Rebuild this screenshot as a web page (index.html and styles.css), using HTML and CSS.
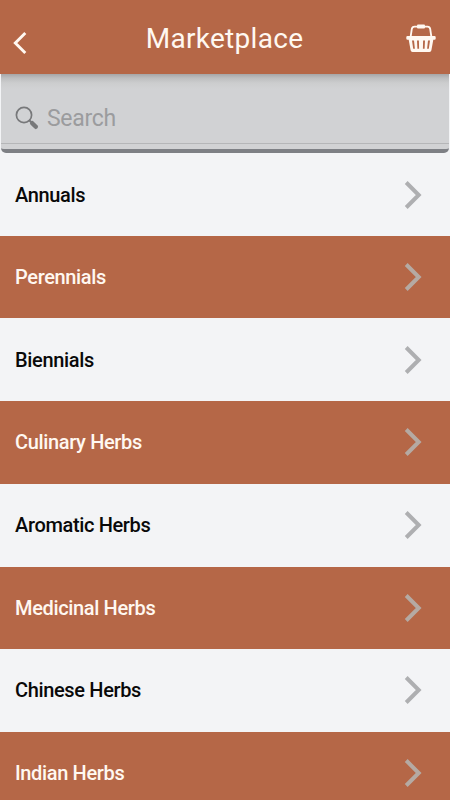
FILE: index.html
```html
<!DOCTYPE html>
<html lang="en">
<head>
    <meta charset="UTF-8">
    <meta name="viewport" content="width=device-width, initial-scale=1.0">
    <title>Marketplace</title>
    <link rel="stylesheet" href="styles.css">
</head>
<body>
    <svg class="symbols">
        <symbol id="chevron" viewBox="0 0 18 30">
            <path d="M2.2 2.5 L14.7 15 L2.2 27.5" fill="none" stroke="currentColor" stroke-width="4"/>
        </symbol>
    </svg>

    <header class="header">
        <a class="back" href="#" aria-label="Back">
            <svg width="16" height="24" viewBox="0 0 16 24">
                <path d="M12.3 2 L2.3 12 L12.3 22" fill="none" stroke="currentColor" stroke-width="2.9"/>
            </svg>
        </a>
        <h1>Marketplace</h1>
        <a class="basket" href="#" aria-label="Basket">
            <svg width="30" height="28" viewBox="0 0 30 28">
                <path d="M4.6 13 L5.8 5 Q6.2 2.6 8.5 2.6 H21.5 Q23.8 2.6 24.2 5 L25.4 13" fill="none" stroke="currentColor" stroke-width="1.8"/>
                <rect x="11" y="0.6" width="8" height="3.8" rx="1" fill="currentColor"/>
                <path fill="currentColor" fill-rule="evenodd" d="M1.5 12 H28.5 Q29.7 12 29.7 13.2 V14.5 Q29.7 15.7 28.5 15.7 H27.3 L25.4 26.3 Q25.1 28 23.5 28 H6.5 Q4.9 28 4.6 26.3 L2.7 15.7 H1.5 Q0.3 15.7 0.3 14.5 V13.2 Q0.3 12 1.5 12 Z M6 16.5 L7.2 24.8 H8.9 L8 16.5 Z M11 16.5 L11.4 24.8 H13.1 L12.9 16.5 Z M17.1 16.5 L16.9 24.8 H18.6 L19 16.5 Z M22 16.5 L21.1 24.8 H22.8 L24 16.5 Z"/>
            </svg>
        </a>
    </header>

    <div class="search">
        <svg width="24" height="24" viewBox="0 0 24 24">
            <circle cx="9" cy="9" r="7.6" fill="none" stroke="currentColor" stroke-width="1.7"/>
            <path d="M14 14 L17 17" stroke="currentColor" stroke-width="2"/>
            <path d="M17.2 17.2 L20.8 20.8" stroke="currentColor" stroke-width="4.4" stroke-linecap="round"/>
        </svg>
        <input type="text" placeholder="Search">
    </div>

    <ul class="list">
        <li><span>Annuals</span><svg><use href="#chevron"/></svg></li>
        <li><span>Perennials</span><svg><use href="#chevron"/></svg></li>
        <li><span>Biennials</span><svg><use href="#chevron"/></svg></li>
        <li><span>Culinary Herbs</span><svg><use href="#chevron"/></svg></li>
        <li><span>Aromatic Herbs</span><svg><use href="#chevron"/></svg></li>
        <li><span>Medicinal Herbs</span><svg><use href="#chevron"/></svg></li>
        <li><span>Chinese Herbs</span><svg><use href="#chevron"/></svg></li>
        <li><span>Indian Herbs</span><svg><use href="#chevron"/></svg></li>
    </ul>
</body>
</html>
```

FILE: styles.css
```css
* {
    box-sizing: border-box;
}
body {
    margin: 0;
    height: 100vh;
    overflow: hidden;
    background-color: #f3f4f6;
    font-family: Roboto, sans-serif;
}
.symbols {
    display: none;
}
.header {
    display: grid;
    grid-template-columns: 60px 1fr 60px;
    height: 74px;
    padding: 2px 14px 0 13px;
    align-items: center;
    background-color: #b56747;
    color: #fff8f1;
}
.header h1 {
    margin: 0;
    font-size: 28px;
    font-weight: 400;
    letter-spacing: 0.3px;
    text-align: center;
}
.header a {
    display: flex;
    color: inherit;
}
.back {
    padding-top: 9px;
}
.basket {
    justify-content: flex-end;
}
.search {
    display: flex;
    align-items: center;
    gap: 8px;
    height: 79px;
    margin: 0 1px;
    padding: 13px 14px 0;
    border-bottom: 4px solid #7e8085;
    border-radius: 0 0 5px 5px;
    background: linear-gradient(#a6a6a7, #bdbebf 4px, #cccdce 9px, #d1d2d4 15px, #d1d2d4 69px, #b5b6b8 69px, #b5b6b8 70px, #d1d2d4 70px);
    color: #77787a;
}
.search input {
    width: 300px;
    padding: 0;
    border: none;
    outline: none;
    background: none;
    font-family: inherit;
    font-size: 23px;
    letter-spacing: -0.3px;
}
.search input::placeholder {
    color: #9b9c9e;
}
.list {
    margin: 0;
    padding: 0;
    list-style: none;
}
.list li {
    display: flex;
    justify-content: space-between;
    align-items: center;
    height: 83px;
    padding: 0 28px 0 15px;
    color: #090909;
    font-size: 20px;
    font-weight: 500;
    letter-spacing: -0.35px;
}
.list li:nth-child(even) {
    height: 82.3px;
    background-color: #b56747;
    color: #fff8f1;
}
.list svg {
    width: 18px;
    height: 30px;
    color: #aeafb1;
}
.list li:nth-child(even) svg {
    color: #b5aaa3;
}
```
